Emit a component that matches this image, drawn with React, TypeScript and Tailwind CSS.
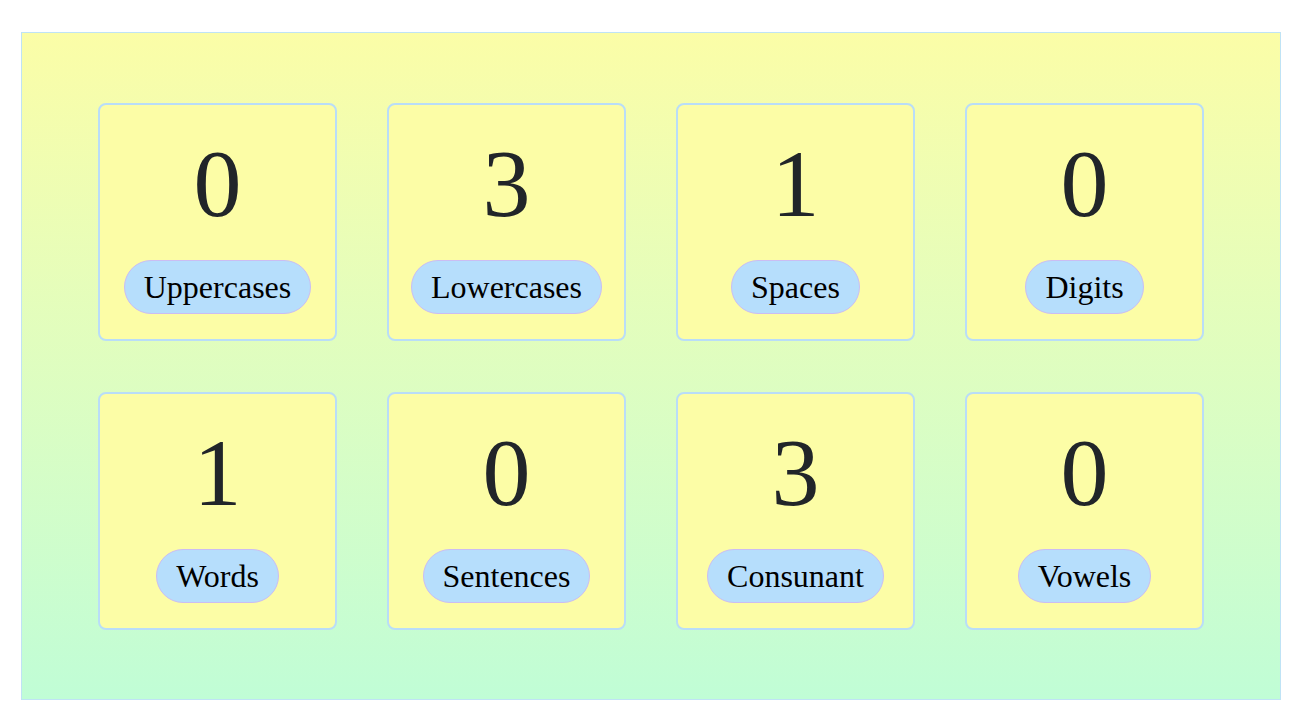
const stats: Array<{ value: number; label: string }> = [
  { value: 0, label: "Uppercases" },
  { value: 3, label: "Lowercases" },
  { value: 1, label: "Spaces" },
  { value: 0, label: "Digits" },
  { value: 1, label: "Words" },
  { value: 0, label: "Sentences" },
  { value: 3, label: "Consunant" },
  { value: 0, label: "Vowels" },
];

const StatCard = ({ value, label }: { value: number; label: string }) => {
  return (
    <div className="w-[239px] h-[238px] flex flex-col items-center rounded-lg border-2 border-[#b9ddf8] bg-[#fcfda6] pt-[26px]">
      <div className="text-[96px] leading-[106px] text-[#212529]">{value}</div>
      <div className="mt-[23px] h-[54px] flex items-center rounded-full border border-[#cbbdf3] bg-[#b6defc] px-[19px] text-[32px] leading-none text-black">
        {label}
      </div>
    </div>
  );
};

const App = () => {
  return (
    <div className="min-h-screen bg-white pt-[32px] pl-[21px] font-['Liberation_Serif',serif]">
      <div className="w-[1260px] h-[668px] border border-[#bfe3f5] bg-gradient-to-b from-[#fbfda7] to-[#c0fdd6] flex items-center justify-center">
        <div className="grid grid-cols-4 gap-x-[50px] gap-y-[51px]">
          {stats.map((stat, index) => {
            return <StatCard key={index} value={stat.value} label={stat.label} />;
          })}
        </div>
      </div>
    </div>
  );
};

export default App;
